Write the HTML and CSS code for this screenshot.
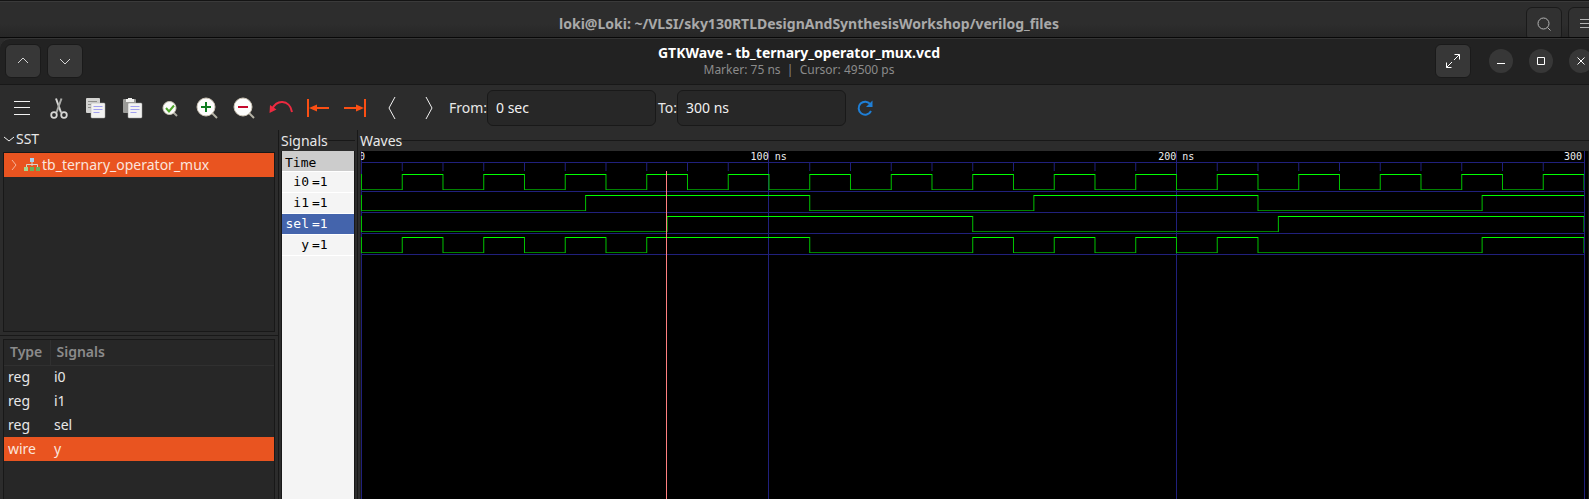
FILE: index.html
```html
<!DOCTYPE html>
<html lang="en">
<head>
<meta charset="utf-8">
<title>GTKWave - tb_ternary_operator_mux.vcd</title>
<link rel="stylesheet" href="styles.css">
</head>
<body>
<header class="terminal-bar">
  <h2 class="terminal-title">loki@Loki: ~/VLSI/sky130RTLDesignAndSynthesisWorkshop/verilog_files</h2>
  <div class="terminal-actions">
    <button class="square-btn dim" aria-label="Search"><svg width="16" height="16" viewBox="0 0 16 16"><circle cx="7.5" cy="7.5" r="5.5"/><path d="M11.5 11.5l3 3"/></svg></button>
    <button class="square-btn dim" aria-label="Terminal menu"><svg width="16" height="16" viewBox="0 0 16 16"><path d="M2 3.5h12M2 7.5h12M2 11.5h12"/></svg></button>
  </div>
</header>

<main class="window">
  <header class="titlebar">
    <div class="bar-group">
      <button class="square-btn" aria-label="Previous"><svg width="16" height="16" viewBox="0 0 16 16"><path d="M3 10l5-5 5 5"/></svg></button>
      <button class="square-btn" aria-label="Next"><svg width="16" height="16" viewBox="0 0 16 16"><path d="M3 6l5 5 5-5"/></svg></button>
    </div>
    <div class="heading">
      <h1 class="title">GTKWave - tb_ternary_operator_mux.vcd</h1>
      <p class="subtitle">Marker: 75 ns&nbsp; |&nbsp; Cursor: 49500 ps</p>
    </div>
    <div class="bar-group end">
      <button class="square-btn bright" aria-label="Full screen"><svg width="16" height="16" viewBox="0 0 16 16"><path d="M9.500 1.500h5v5M14.500 1.500L9 7M6.500 14.500h-5v-5M1.500 14.500L7 9"/></svg></button>
      <div class="window-controls">
        <button class="round-btn" aria-label="Minimize"><svg width="10" height="10" viewBox="0 0 10 10"><path d="M1 7.500h8"/></svg></button>
        <button class="round-btn" aria-label="Maximize"><svg width="10" height="10" viewBox="0 0 10 10"><path d="M1.500 1.500h7v7h-7z"/></svg></button>
        <button class="round-btn" aria-label="Close"><svg width="10" height="10" viewBox="0 0 10 10"><path d="M1.500 1.500l7 7M8.500 1.500l-7 7"/></svg></button>
      </div>
    </div>
  </header>

  <div class="toolbar">
    <button class="tool" aria-label="Menu"><svg viewBox="0 0 24 24"><path class="line" d="M4 5.500h16M4 11.500h16M4 18.500h16"/></svg></button>
    <button class="tool" aria-label="Cut"><svg viewBox="0 0 24 24"><g fill="none" stroke="#d6d6d4"><path stroke-width="2" d="M9 2.500l5 14"/><path stroke-width="2" d="M14.500 2.500L9.500 16.500" stroke="#a9aaa7"/><circle cx="7" cy="19" r="2.800" stroke-width="1.800"/><circle cx="17" cy="19" r="2.800" stroke-width="1.800"/></g></svg></button>
    <button class="tool" aria-label="Copy"><svg viewBox="0 0 24 24"><rect x="2" y="2" width="14" height="15" rx="1" fill="#d3d3d1"/><path d="M4 5.500h9M4 8.500h4M4 11.500h3" stroke="#8f8f8c"/><rect x="7" y="7" width="14" height="15" rx="1" fill="#f2f2f1" stroke="#aaa" stroke-width=".5"/><path d="M9.500 10.500h9M9.500 13.500h9M9.500 16.500h6" stroke="#a19ff0"/></svg></button>
    <button class="tool" aria-label="Paste"><svg viewBox="0 0 24 24"><rect x="2" y="3" width="13" height="14" rx="1" fill="#9b9b98"/><path d="M5 3h2V2h4v1h2v3H5z" fill="#f0f0ee"/><rect x="7" y="7" width="14" height="15" rx="1" fill="#f2f2f1" stroke="#999" stroke-width=".5"/><path d="M9.500 10.500h9M9.500 13.500h9M9.500 16.500h6" stroke="#a19ff0"/></svg></button>
    <button class="tool" aria-label="Zoom fit"><svg viewBox="0 0 24 24"><path d="M15 16l4 4" stroke="#aaa99f" stroke-width="2"/><circle cx="11.500" cy="12" r="6.500" fill="#fbfbfa" stroke="#cfcabb"/><path d="M8 12l3 3.500 5-6" fill="none" stroke="#4ea52a" stroke-width="2"/></svg></button>
    <button class="tool" aria-label="Zoom in"><svg viewBox="0 0 24 24"><path d="M17 17l5 5" stroke="#b5b3a6" stroke-width="2"/><circle cx="11" cy="11" r="9" fill="#fdfdfc" stroke="#cbc3b4"/><path d="M6 11h10M11 6v10" stroke="#0f7d20" stroke-width="2"/></svg></button>
    <button class="tool" aria-label="Zoom out"><svg viewBox="0 0 24 24"><path d="M17 17l5 5" stroke="#b5b3a6" stroke-width="2"/><circle cx="11" cy="11" r="9" fill="#fdfdfc" stroke="#cbc3b4"/><path d="M6 11h10" stroke="#c4092c" stroke-width="2"/></svg></button>
    <button class="tool" aria-label="Zoom undo"><svg viewBox="0 0 24 24"><path d="M3 14C6 3 21 3 23 16" fill="none" stroke="#ed2a40" stroke-width="2"/><path d="M1 9l-.500 8 7-3.500z" fill="#ed2a40"/></svg></button>
    <button class="tool" aria-label="Zoom to start"><svg viewBox="0 0 24 24"><path d="M2 3v18M6 12h17" stroke="#fb4f14" stroke-width="2"/><path d="M3 12l8-3.500v7z" fill="#fb4f14"/></svg></button>
    <button class="tool" aria-label="Zoom to end"><svg viewBox="0 0 24 24"><path d="M22 3v18M1 12h17" stroke="#fb4f14" stroke-width="2"/><path d="M21 12l-8-3.500v7z" fill="#fb4f14"/></svg></button>
    <button class="tool" aria-label="Previous edge"><svg viewBox="0 0 24 24"><path class="line" d="M15 1L9 12l6 11"/></svg></button>
    <button class="tool" aria-label="Next edge"><svg viewBox="0 0 24 24"><path class="line" d="M9 1l6 11-6 11"/></svg></button>
    <label class="field-label" for="from">From:</label>
    <input class="field" id="from" type="text" value="0 sec">
    <label class="field-label to" for="to">To:</label>
    <input class="field" id="to" type="text" value="300 ns">
    <button class="tool" aria-label="Reload"><svg viewBox="0 0 24 24"><path d="M17.500 8.500A6.500 6.500 0 1 0 18 15" fill="none" stroke="#1f7fd6" stroke-width="2"/><path d="M19.500 4.500v6.500h-6.500z" fill="#1f7fd6"/></svg></button>
  </div>

  <div class="workspace">
    <aside class="sidebar">
      <section class="sst">
        <h3 class="sst-title"><svg width="12" height="12" viewBox="0 0 12 12"><path class="line" d="M1 4l5 4 5-4"/></svg>SST</h3>
        <ul class="tree">
          <li class="tree-row">
            <svg width="12" height="12" viewBox="0 0 12 12"><path d="M4 1l4 5-4 5" fill="none" stroke="#f6b49c"/></svg>
            <svg width="16" height="14" viewBox="0 0 16 14"><path d="M8 4v4M2.500 9V6.500h11V9" fill="none" stroke="#d9d5cc"/><path d="M6 0h4v4H6z" fill="#a9d3f2"/><path d="M0 9h4v4H0z" fill="#a8d98e"/><path d="M6 9h4v4H6zM12 9h4v4h-4z" fill="#6fb05a"/></svg>
            <span>tb_ternary_operator_mux</span>
          </li>
        </ul>
      </section>
      <section class="vars">
        <table class="var-table">
          <thead><tr><th class="type">Type</th><th>Signals</th></tr></thead>
          <tbody>
            <tr><td>reg</td><td>i0</td></tr>
            <tr><td>reg</td><td>i1</td></tr>
            <tr><td>reg</td><td>sel</td></tr>
            <tr class="selected"><td>wire</td><td>y</td></tr>
          </tbody>
        </table>
      </section>
    </aside>

    <section class="signals">
      <h3 class="frame-title">Signals</h3>
      <div class="signal-list">
        <div class="time">Time</div>
        <div class="signal"><span class="name">i0</span><span>=1</span></div>
        <div class="signal"><span class="name">i1</span><span>=1</span></div>
        <div class="signal selected"><span class="name">sel</span><span>=1</span></div>
        <div class="signal"><span class="name">y</span><span>=1</span></div>
      </div>
    </section>

    <section class="waves">
      <h3 class="frame-title">Waves</h3>
      <div class="canvas">
        <svg class="plot" width="100%" height="100%">
          <g class="grid">
            <line x1="0.5" x2="0.5" y1="0" y2="100%"/>
            <line x1="33.333%" x2="33.333%" y1="0" y2="100%"/>
            <line x1="66.667%" x2="66.667%" y1="0" y2="100%"/>
            <line x1="100%" x2="100%" y1="0" y2="100%"/>
          </g>
          <svg width="100%" height="110" viewBox="-0.12 0 300.12 110" preserveAspectRatio="none">
            <path class="grid" d="M0 11.500H300M0 40.500H300M0 61.500H300M0 82.500H300M0 103.500H300"/>
            <path class="grid" d="M10 11v9M20 11v9M30 11v9M40 11v9M50 11v9M60 11v9M70 11v9M80 11v9M90 11v9M110 11v9M120 11v9M130 11v9M140 11v9M150 11v9M160 11v9M170 11v9M180 11v9M190 11v9M210 11v9M220 11v9M230 11v9M240 11v9M250 11v9M260 11v9M270 11v9M280 11v9M290 11v9"/>
            <!-- i0 -->
            <path class="low" d="M0 38.500H10M20 38.500h10M40 38.500h10M60 38.500h10M80 38.500h10M100 38.500h10M120 38.500h10M140 38.500h10M160 38.500h10M180 38.500h10M200 38.500h10M220 38.500h10M240 38.500h10M260 38.500h10M280 38.500h10"/>
            <path class="edge" d="M0 23v16M10 23v16M20 23v16M30 23v16M40 23v16M50 23v16M60 23v16M70 23v16M80 23v16M90 23v16M100 23v16M110 23v16M120 23v16M130 23v16M140 23v16M150 23v16M160 23v16M170 23v16M180 23v16M190 23v16M200 23v16M210 23v16M220 23v16M230 23v16M240 23v16M250 23v16M260 23v16M270 23v16M280 23v16M290 23v16M300 23v16"/>
            <path class="high" d="M10 23.500h10M30 23.500h10M50 23.500h10M70 23.500h10M90 23.500h10M110 23.500h10M130 23.500h10M150 23.500h10M170 23.500h10M190 23.500h10M210 23.500h10M230 23.500h10M250 23.500h10M270 23.500h10M290 23.500h10"/>
            <!-- i1 -->
            <path class="low" d="M0 59.500H55M110 59.500H165M220 59.500H275"/>
            <path class="edge" d="M0 44v16M55 44v16M110 44v16M165 44v16M220 44v16M275 44v16"/>
            <path class="high" d="M55 44.500H110M165 44.500H220M275 44.500H300"/>
            <!-- sel -->
            <path class="low" d="M0 80.500H75M150 80.500H225"/>
            <path class="edge" d="M0 65v16M75 65v16M150 65v16M225 65v16M300 65v16"/>
            <path class="high" d="M75 65.500H150M225 65.500H300"/>
            <!-- y -->
            <path class="low" d="M0 101.500H10M20 101.500h10M40 101.500h10M60 101.500h10M110 101.500H150M160 101.500h10M180 101.500h10M200 101.500h10M220 101.500H275"/>
            <path class="edge" d="M0 86v16M10 86v16M20 86v16M30 86v16M40 86v16M50 86v16M60 86v16M70 86v16M110 86v16M150 86v16M160 86v16M170 86v16M180 86v16M190 86v16M200 86v16M210 86v16M220 86v16M275 86v16M300 86v16"/>
            <path class="high" d="M10 86.500h10M30 86.500h10M50 86.500h10M70 86.500H110M150 86.500h10M170 86.500h10M190 86.500h10M210 86.500h10M275 86.500H300"/>
          </svg>
          <line class="marker" x1="25%" x2="25%" y1="20" y2="100%"/>
          <g class="tick-labels">
            <text x="1" y="9" text-anchor="middle">0</text>
            <text x="33.333%" y="9" text-anchor="middle">100 ns</text>
            <text x="66.667%" y="9" text-anchor="middle">200 ns</text>
            <text x="100%" y="9" dx="-2" text-anchor="end">300</text>
          </g>
        </svg>
      </div>
    </section>
  </div>
</main>
</body>
</html>
```

FILE: styles.css
```css
* {
  box-sizing: border-box;
}

body {
  margin: 0;
  height: 100vh;
  overflow: hidden;
  display: flex;
  flex-direction: column;
  background: #2c2c2c;
  color: #e8e8e8;
  font: 14px/20px "Noto Sans", "Open Sans", sans-serif;
}

h1, h2, h3, p, ul {
  margin: 0;
  padding: 0;
  font-size: inherit;
  font-weight: inherit;
}

button {
  flex: none;
  display: flex;
  align-items: center;
  justify-content: center;
  padding: 0;
  border: 0;
  background: none;
  color: inherit;
}

svg {
  flex: none;
  display: block;
}

.line {
  fill: none;
  stroke: #f2f2f2;
}

/* Terminal behind the main window; both bars run past the right edge */
.terminal-bar {
  flex: none;
  width: calc(100% + 29px);
  height: 37px;
  overflow: hidden;
  display: grid;
  grid-template-columns: 1fr auto 1fr;
  align-items: start;
  padding: 6px 14px 0;
  border-top: 1px solid #141414;
  box-shadow: inset 0 1px #3a3a3a;
  background: linear-gradient(#2d2d2d 65%, #262626);
}

.terminal-title {
  grid-column: 2;
  padding-top: 7px;
  color: #a9a9a9;
  font-weight: 700;
}

.terminal-actions {
  display: flex;
  justify-content: flex-end;
  gap: 6px;
}

.window {
  flex: 1;
  min-height: 0;
  display: flex;
  flex-direction: column;
  border-top: 1px solid #080808;
}

.titlebar {
  flex: none;
  width: calc(100% + 16px);
  height: 47px;
  display: grid;
  grid-template-columns: 1fr auto 1fr;
  align-items: center;
  padding: 0 12px 1px 5px;
  border-top: 1px solid #343434;
  border-bottom: 1px solid #181818;
  border-top-left-radius: 10px;
  background: #222;
}

.bar-group {
  display: flex;
  align-items: center;
  gap: 6px;
}

.end {
  justify-content: flex-end;
  gap: 18px;
}

.window-controls {
  display: flex;
  gap: 16px;
}

.square-btn {
  width: 36px;
  height: 34px;
  border: 1px solid #1a1a1a;
  border-radius: 6px;
  background: #373737;
}

.square-btn svg,
.round-btn svg {
  fill: none;
  stroke: #d4d4d4;
}

.dim {
  background: #313131;
}

.dim svg {
  stroke: #b4b4b4;
}

.bright svg {
  stroke: #fff;
}

.round-btn {
  width: 24px;
  height: 24px;
  border-radius: 50%;
  background: #373737;
}

.round-btn svg {
  stroke: #fff;
}

.heading {
  padding-bottom: 1px;
  text-align: center;
}

.title {
  color: #fff;
  font-weight: 700;
  line-height: 18px;
}

.subtitle {
  color: #8b8b8b;
  font-size: 12px;
  line-height: 16px;
}

.toolbar {
  flex: none;
  height: 45px;
  display: flex;
  align-items: center;
  padding-left: 3px;
}

.tool {
  width: 37px;
  height: 36px;
}

.tool svg {
  width: 24px;
  height: 24px;
}

.field-label {
  width: 40px;
  text-align: right;
}

.field-label.to {
  width: 21px;
}

.field {
  width: 169px;
  height: 36px;
  padding: 0 8px;
  border: 1px solid #191919;
  border-radius: 6px;
  background: #272727;
  color: #f2f2f2;
  font: inherit;
}

.workspace {
  flex: 1;
  min-height: 0;
  display: flex;
}

.sidebar {
  flex: none;
  width: 279px;
  display: flex;
  flex-direction: column;
  border-right: 1px solid #181818;
}

.sst {
  padding: 0 3px 3px;
  border-bottom: 1px solid #181818;
}

.sst-title {
  height: 22px;
  display: flex;
  align-items: center;
  gap: 1px;
  padding-bottom: 4px;
}

.tree {
  height: 180px;
  border: 1px solid #181818;
  background: #272727;
  list-style: none;
}

.tree-row {
  height: 24px;
  display: flex;
  align-items: center;
  gap: 2px;
  padding-left: 4px;
  background: #e95420;
  color: #fbe4dc;
}

.tree-row svg + svg {
  margin-left: 2px;
}

.vars {
  flex: 1;
  margin: 3px 3px 0;
  border: 1px solid #181818;
  border-bottom: 0;
  background: #272727;
}

.var-table {
  width: 100%;
  border-collapse: collapse;
  table-layout: fixed;
}

.var-table th {
  height: 25px;
  padding: 0 6px;
  border-bottom: 1px solid #303030;
  color: #8b8b8b;
  font-weight: 600;
  text-align: left;
}

.var-table .type {
  width: 46px;
  border-right: 1px solid #303030;
}

.var-table td {
  height: 24px;
  padding: 0 4px;
}

.var-table .selected {
  background: #e95420;
  color: #fbe4dc;
}

.signals {
  flex: none;
  width: 79px;
  display: flex;
  flex-direction: column;
  padding: 0 2px;
  border-right: 1px solid #181818;
}

.frame-title {
  flex: none;
  height: 21px;
  display: flex;
  align-items: center;
}

.frame-title::after {
  content: "";
  flex: 1;
  height: 1px;
  background: #181818;
}

.signal-list {
  flex: 1;
  border: solid #181818;
  border-width: 0 1px;
  background: #f4f4f4;
  color: #000;
  font: 13px/20px "DejaVu Sans Mono", monospace;
}

.time {
  height: 21px;
  padding: 2px 3px 0;
  border-bottom: 1px solid #fff;
  background: #ccc;
}

.signal {
  height: 21px;
  display: flex;
  gap: 3px;
  padding-left: 3px;
  border-bottom: 1px solid #fff;
}

.signal.selected {
  background: #4464ac;
  color: #fff;
}

.name {
  width: 24px;
  text-align: right;
}

.waves {
  flex: 1;
  min-width: 0;
  display: flex;
  flex-direction: column;
  padding-left: 2px;
}

.canvas {
  flex: 1;
  min-height: 0;
  overflow: hidden;
  padding-right: 4px;
  border: solid #181818;
  border-width: 0 1px;
  background: #000;
}

.plot {
  overflow: visible;
  shape-rendering: crispEdges;
}

.plot path {
  fill: none;
  vector-effect: non-scaling-stroke;
}

.grid {
  stroke: #20207c;
}

.low {
  stroke: #008200;
}

.edge {
  stroke: #00c200;
}

.high {
  stroke: #0f0;
}

.marker {
  stroke: #ff8080;
}

.tick-labels {
  fill: #eee;
  font: 10px "DejaVu Sans Mono", monospace;
}
```
